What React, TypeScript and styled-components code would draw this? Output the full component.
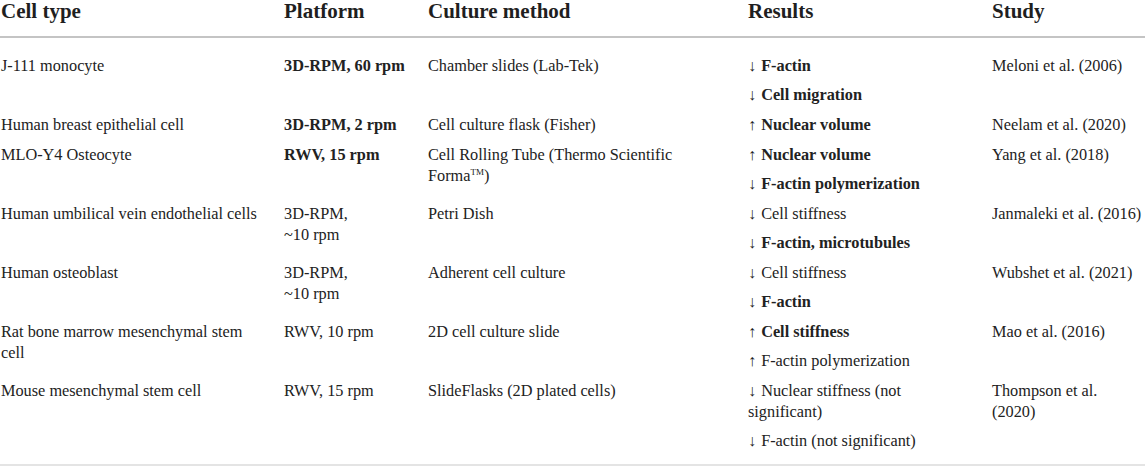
import React from 'react';
import styled, { createGlobalStyle } from 'styled-components';

const GlobalStyle = createGlobalStyle`
  html, body {
    margin: 0;
    padding: 0;
    background: #ffffff;
  }
  body {
    font-family: 'Liberation Serif', 'Times New Roman', serif;
    color: #222222;
  }
`;

const COLUMNS = '283px 144px 320px 244px 1fr';

const Table = styled.section`
  width: 1145px;
  padding-left: 1px;
  box-sizing: border-box;
`;

const HeadRow = styled.div`
  display: grid;
  grid-template-columns: ${COLUMNS};
  height: 36px;
  border-bottom: 2px solid #c4c4c4;
  margin-left: -1px;
  padding-left: 1px;
`;

const HeadCell = styled.div`
  font-size: 21px;
  font-weight: bold;
  line-height: 23px;
  color: #1f1f1f;
`;

const Body = styled.div`
  padding: 12px 0 9px;
  border-bottom: 2px solid #e4e4e4;
  margin-left: -1px;
  padding-left: 1px;
`;

const Row = styled.div`
  display: grid;
  grid-template-columns: ${COLUMNS};
  padding: 0.5px 0;
`;

const Cell = styled.div`
  font-size: 16.3px;
  line-height: 21px;
`;

const Para = styled.p<{ $bold?: boolean }>`
  margin: 0;
  padding: 4px 0;
  font-weight: ${(p) => (p.$bold ? 'bold' : 'normal')};
`;

const Arrow = styled.span`
  font-weight: normal;
  margin-right: 5px;
`;

const Tm = styled.sup`
  font-size: 9px;
  line-height: 0;
  vertical-align: 6px;
`;

type Result = { dir: 'up' | 'down'; text: React.ReactNode; bold?: boolean };

type Entry = {
  cell: React.ReactNode;
  platform: React.ReactNode;
  platformBold?: boolean;
  method: React.ReactNode;
  results: Result[];
  study: React.ReactNode;
};

const rows: Entry[] = [
  {
    cell: 'J-111 monocyte',
    platform: '3D-RPM, 60 rpm',
    platformBold: true,
    method: 'Chamber slides (Lab-Tek)',
    results: [
      { dir: 'down', text: 'F-actin', bold: true },
      { dir: 'down', text: 'Cell migration', bold: true },
    ],
    study: 'Meloni et al. (2006)',
  },
  {
    cell: 'Human breast epithelial cell',
    platform: '3D-RPM, 2 rpm',
    platformBold: true,
    method: 'Cell culture flask (Fisher)',
    results: [{ dir: 'up', text: 'Nuclear volume', bold: true }],
    study: 'Neelam et al. (2020)',
  },
  {
    cell: 'MLO-Y4 Osteocyte',
    platform: 'RWV, 15 rpm',
    platformBold: true,
    method: (
      <>
        Cell Rolling Tube (Thermo Scientific
        <br />
        Forma<Tm>TM</Tm>)
      </>
    ),
    results: [
      { dir: 'up', text: 'Nuclear volume', bold: true },
      { dir: 'down', text: 'F-actin polymerization', bold: true },
    ],
    study: 'Yang et al. (2018)',
  },
  {
    cell: 'Human umbilical vein endothelial cells',
    platform: (
      <>
        3D-RPM,
        <br />~10 rpm
      </>
    ),
    method: 'Petri Dish',
    results: [
      { dir: 'down', text: 'Cell stiffness' },
      { dir: 'down', text: 'F-actin, microtubules', bold: true },
    ],
    study: 'Janmaleki et al. (2016)',
  },
  {
    cell: 'Human osteoblast',
    platform: (
      <>
        3D-RPM,
        <br />~10 rpm
      </>
    ),
    method: 'Adherent cell culture',
    results: [
      { dir: 'down', text: 'Cell stiffness' },
      { dir: 'down', text: 'F-actin', bold: true },
    ],
    study: 'Wubshet et al. (2021)',
  },
  {
    cell: (
      <>
        Rat bone marrow mesenchymal stem
        <br />
        cell
      </>
    ),
    platform: 'RWV, 10 rpm',
    method: '2D cell culture slide',
    results: [
      { dir: 'up', text: 'Cell stiffness', bold: true },
      { dir: 'up', text: 'F-actin polymerization' },
    ],
    study: 'Mao et al. (2016)',
  },
  {
    cell: 'Mouse mesenchymal stem cell',
    platform: 'RWV, 15 rpm',
    method: 'SlideFlasks (2D plated cells)',
    results: [
      {
        dir: 'down',
        text: (
          <>
            Nuclear stiffness (not
            <br />
            significant)
          </>
        ),
      },
      { dir: 'down', text: 'F-actin (not significant)' },
    ],
    study: (
      <>
        Thompson et al.
        <br />
        (2020)
      </>
    ),
  },
];

const headers = ['Cell type', 'Platform', 'Culture method', 'Results', 'Study'];

const App: React.FC = () => {
  return (
    <>
      <GlobalStyle />
      <Table>
        <HeadRow>
          {headers.map((h) => (
            <HeadCell key={h}>{h}</HeadCell>
          ))}
        </HeadRow>
        <Body>
          {rows.map((r, i) => (
            <Row key={i}>
              <Cell>
                <Para>{r.cell}</Para>
              </Cell>
              <Cell>
                <Para $bold={r.platformBold}>{r.platform}</Para>
              </Cell>
              <Cell>
                <Para>{r.method}</Para>
              </Cell>
              <Cell>
                {r.results.map((res, j) => (
                  <Para key={j} $bold={res.bold}>
                    <Arrow>{res.dir === 'up' ? '↑' : '↓'}</Arrow>
                    {res.text}
                  </Para>
                ))}
              </Cell>
              <Cell>
                <Para>{r.study}</Para>
              </Cell>
            </Row>
          ))}
        </Body>
      </Table>
    </>
  );
};

export default App;
